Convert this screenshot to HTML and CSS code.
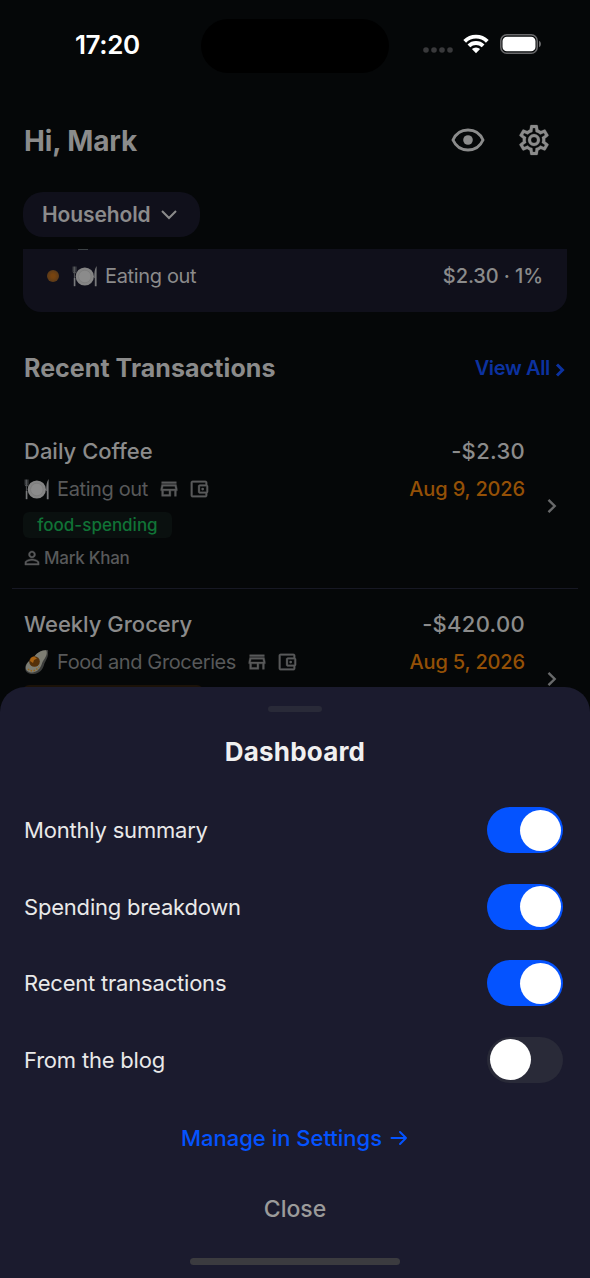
FILE: index.html
```html
<!DOCTYPE html>
<html lang="en">
<head>
<meta charset="utf-8">
<title>Dashboard</title>
<link rel="stylesheet" href="styles.css">
</head>
<body>
<svg class="defs" aria-hidden="true">
  <symbol id="plate" viewBox="0 0 26 22">
    <path d="M1.200 1.500v5.200q0 1.400 1.200 1.700V21M3.900 1.500v5.200q0 1.400-1.200 1.700M2.500 1.500V8" fill="none" stroke="#55575a" stroke-width="1"/>
    <path d="M1.800 13h1.600v8.200H1.800z" fill="#77787a"/>
    <path d="M24.600 1v20.200h-1.800v-8l-.6-.5q0-8.500 2.400-11.700z" fill="#77787a"/>
    <circle cx="12.800" cy="11.500" r="9.100" fill="#858585"/>
    <circle cx="12.800" cy="11.500" r="6.300" fill="#8b8b8b" stroke="#7b7b7b" stroke-width=".8"/>
  </symbol>
  <symbol id="store" viewBox="0 0 24 24"><path d="M18.360 9l.6 3H5.040l.6-3h12.720M20 4H4v2h16V4zm0 3H4l-1 5v2h1v6h10v-6h4v6h2v-6h1v-2l-1-5zM6 18v-4h6v4H6z" fill="currentColor" stroke="currentColor" stroke-width=".4"/></symbol>
  <symbol id="wallet" viewBox="0 0 24 24"><path d="M21 7.280V5c0-1.100-.9-2-2-2H5c-1.110 0-2 .9-2 2v14c0 1.100.89 2 2 2h14c1.100 0 2-.9 2-2v-2.280c.59-.35 1-.98 1-1.720V9c0-.74-.41-1.370-1-1.720zM20 9v6h-7V9h7zM5 19V5h14v2h-6c-1.100 0-2 .9-2 2v6c0 1.100.9 2 2 2h6v2H5z" fill="currentColor" stroke="currentColor" stroke-width=".3"/><circle cx="16" cy="12" r="1.500" fill="currentColor"/></symbol>
  <symbol id="chevron" viewBox="0 0 10 16"><path d="M1.500 1.800 7.700 8l-6.200 6.200" fill="none" stroke="currentColor" stroke-width="2.400"/></symbol>
</svg>
<div class="screen">
  <header class="status">
    <span class="time">17:20</span>
    <span class="island"></span>
    <span class="signals">
      <svg class="dots" viewBox="0 0 30 6"><g fill="#39393b"><circle cx="3" cy="3" r="2.800"/><circle cx="11" cy="3" r="2.800"/><circle cx="19" cy="3" r="2.800"/><circle cx="27" cy="3" r="2.800"/></g></svg>
      <svg class="wifi" viewBox="0 0 26 20"><g fill="none" stroke="#fff" stroke-width="3.900"><path d="M1.700 7.300a16 16 0 0 1 22.600 0"/><path d="M5.900 11.900a10.100 10.100 0 0 1 14.200 0"/></g><path d="M8.900 15.100a5.800 5.800 0 0 1 8.200 0L13 19.300z" fill="#fff"/></svg>
      <svg class="battery" viewBox="0 0 42 20"><rect x=".8" y=".8" width="36.400" height="18.400" rx="6" fill="none" stroke="#6a6a6c" stroke-width="1.500"/><rect x="2.500" y="2.700" width="33" height="14.600" rx="4.400" fill="#fff"/><path d="M39 6.800q2 1 2 3.200t-2 3.200z" fill="#6a6a6c"/></svg>
    </span>
  </header>
  <main class="page">
    <div class="greeting">
      <h1>Hi, Mark</h1>
      <svg class="eye" viewBox="0 0 34 26"><path d="M2 13C5 6.200 10.200 3 17 3S29 6.200 32 13C29 19.800 23.800 23 17 23S5 19.800 2 13z" fill="none" stroke="currentColor" stroke-width="2.900"/><circle cx="17" cy="13" r="4.800" fill="currentColor"/></svg>
      <svg class="gear" viewBox="0 0 24 24"><path fill="currentColor" stroke="currentColor" stroke-width=".15" d="M12,8A4,4 0 0,1 16,12A4,4 0 0,1 12,16A4,4 0 0,1 8,12A4,4 0 0,1 12,8M12,10A2,2 0 0,0 10,12A2,2 0 0,0 12,14A2,2 0 0,0 14,12A2,2 0 0,0 12,10M10,22C9.750,22 9.540,21.820 9.500,21.580L9.130,18.930C8.500,18.680 7.960,18.340 7.440,17.940L4.950,18.950C4.730,19.030 4.460,18.950 4.340,18.730L2.340,15.270C2.210,15.050 2.270,14.780 2.460,14.630L4.570,12.970L4.500,12L4.570,11L2.460,9.370C2.270,9.220 2.210,8.950 2.340,8.730L4.340,5.270C4.460,5.050 4.730,4.960 4.950,5.050L7.440,6.050C7.960,5.660 8.500,5.320 9.130,5.070L9.500,2.420C9.540,2.180 9.750,2 10,2H14C14.250,2 14.460,2.180 14.500,2.420L14.870,5.070C15.500,5.320 16.040,5.660 16.560,6.050L19.050,5.050C19.270,4.960 19.540,5.050 19.660,5.270L21.660,8.730C21.790,8.950 21.730,9.220 21.540,9.370L19.430,11L19.500,12L19.430,13L21.540,14.630C21.730,14.780 21.790,15.050 21.660,15.270L19.660,18.730C19.540,18.950 19.270,19.040 19.050,18.950L16.560,17.950C16.040,18.340 15.500,18.680 14.870,18.930L14.500,21.580C14.460,21.820 14.250,22 14,22H10M11.250,4L10.880,6.610C9.680,6.860 8.620,7.500 7.850,8.390L5.440,7.350L4.690,8.650L6.800,10.200C6.400,11.370 6.400,12.640 6.800,13.800L4.680,15.360L5.430,16.660L7.860,15.620C8.630,16.500 9.680,17.140 10.870,17.380L11.240,20H12.760L13.130,17.390C14.320,17.140 15.370,16.500 16.140,15.620L18.570,16.660L19.320,15.360L17.200,13.810C17.600,12.640 17.600,11.370 17.200,10.200L19.310,8.650L18.560,7.350L16.150,8.390C15.380,7.500 14.320,6.860 13.120,6.620L12.750,4H11.250Z"/></svg>
    </div>
    <button class="household"><span>Household</span><svg viewBox="0 0 18 12"><path d="M2 2l7 7 7-7" fill="none" stroke="currentColor" stroke-width="2"/></svg></button>
    <section class="breakdown">
      <span class="sliver"></span>
      <span class="bullet"></span>
      <svg class="plate"><use href="#plate"/></svg>
      <span class="category">Eating out</span>
      <span class="share">$2.30 · 1%</span>
    </section>
    <div class="section-head">
      <h2>Recent Transactions</h2>
      <a class="view-all"><span>View All</span><svg viewBox="0 0 10 14"><path d="M2 1.500 7.500 7 2 12.500" fill="none" stroke="currentColor" stroke-width="3"/></svg></a>
    </div>
    <article class="transaction">
      <div class="details">
        <div class="line title"><span>Daily Coffee</span><span class="amount">-$2.30</span></div>
        <div class="line meta"><svg class="plate"><use href="#plate"/></svg><span class="name">Eating out</span><svg class="mini"><use href="#store"/></svg><svg class="mini"><use href="#wallet"/></svg><span class="date">Aug 9, 2026</span></div>
        <span class="tag">food-spending</span>
        <div class="person"><svg viewBox="3 3 18 18"><path fill="currentColor" stroke="currentColor" stroke-width=".4" d="M12 5.900c1.160 0 2.100.94 2.100 2.100s-.94 2.100-2.100 2.100S9.900 9.160 9.900 8s.94-2.100 2.100-2.100m0 9c2.970 0 6.100 1.460 6.100 2.100v1.100H5.900V17c0-.64 3.130-2.100 6.100-2.100M12 4C9.790 4 8 5.790 8 8s1.790 4 4 4 4-1.790 4-4-1.790-4-4-4zm0 9c-2.670 0-8 1.340-8 4v3h16v-3c0-2.660-5.330-4-8-4z"/></svg><span>Mark Khan</span></div>
      </div>
      <svg class="go"><use href="#chevron"/></svg>
    </article>
    <article class="transaction">
      <div class="details">
        <div class="line title"><span>Weekly Grocery</span><span class="amount">-$420.00</span></div>
        <div class="line meta"><svg class="avocado" viewBox="0 0 26 26"><path d="M23.500 1C17 .5 13 4 9.500 8.500 5.500 11.500 1 14.500 1.200 19.500 1.500 24 6 25.500 10 25c5-.5 8.500-4 10-9 1-4 4.500-7 4-12.500C24.400 2 24 1.300 23.500 1z" fill="#3c3d3c"/><path d="M22 1.200C16 1 12 5 9 9c-3.500 2.500-7.300 5.500-7.200 10 .2 3.300 3.700 4.800 7 4.400 4.700-.6 7.600-4 9-8.400 1.200-4 5-7 5-11.200q0-2-.8-2.600z" fill="#7d7d73"/><path d="M4 20q5 4.500 11-2" fill="none" stroke="#9a671c" stroke-width="1.500" stroke-dasharray="1.500 1.500"/><circle cx="10.500" cy="12.500" r="5.300" fill="#553009"/><path d="M6 12q0-4 4-4.500l3 2-3 1.500-1 3z" fill="#a86213"/></svg><span class="name">Food and Groceries</span><svg class="mini"><use href="#store"/></svg><svg class="mini"><use href="#wallet"/></svg><span class="date">Aug 5, 2026</span></div>
        <span class="tag amber"></span>
      </div>
      <svg class="go"><use href="#chevron"/></svg>
    </article>
  </main>
  <section class="sheet">
    <span class="grabber"></span>
    <h2>Dashboard</h2>
    <div class="option"><span>Monthly summary</span><span class="switch on"></span></div>
    <div class="option"><span>Spending breakdown</span><span class="switch on"></span></div>
    <div class="option"><span>Recent transactions</span><span class="switch on"></span></div>
    <div class="option"><span>From the blog</span><span class="switch"></span></div>
    <a class="manage"><span>Manage in Settings</span><svg viewBox="0 0 18 16"><path d="M1.500 8h14.500M10 2l6 6-6 6" fill="none" stroke="currentColor" stroke-width="2" stroke-linecap="round" stroke-linejoin="round"/></svg></a>
    <button class="close">Close</button>
    <span class="home"></span>
  </section>
</div>
</body>
</html>
```
FILE: styles.css
```css
* { box-sizing: border-box; }
body { margin: 0; background: #050708; font-family: Inter, "Liberation Sans", sans-serif; font-weight: 500; }
h1, h2 { margin: 0; }
svg { display: block; flex: none; }
span { white-space: nowrap; }
button { border: 0; font: inherit; padding: 0; }
.defs { display: none; }
.screen { position: relative; width: 590px; height: 1278px; overflow: hidden; background: #050708; color: #8b8b8b; }

.status { height: 88px; display: grid; grid-template-columns: 201px 188px 1fr; align-items: center; }
.time { padding-left: 75px; color: #fff; font-size: 26px; font-weight: 600; letter-spacing: -.4px; }
.island { height: 54px; border-radius: 27px; background: #000; margin-top: 3px; }
.signals { display: flex; align-items: center; padding-left: 34px; }
.dots { width: 30px; height: 6px; margin-top: 12px; }
.wifi { width: 26px; height: 20px; margin-left: 10px; }
.battery { width: 42px; height: 20px; margin-left: 11px; }

.greeting { height: 104px; padding: 1px 38.500px 0 24px; display: flex; align-items: center; }
.greeting h1 { flex: 1; padding-top: 1px; font-size: 28px; font-weight: 650; letter-spacing: -.1px; }
.eye { width: 34px; height: 26px; margin: 0 31px 1px 0; }
.gear { width: 36px; height: 36px; margin-bottom: 1px; }
.household { display: flex; align-items: center; width: 177px; height: 45px; margin-left: 23px; padding-left: 19px; border-radius: 20px; background: #10101b; color: inherit; font-size: 21px; font-weight: 600; letter-spacing: -.1px; }
.household svg { width: 18px; height: 12px; margin-left: 9px; }
.breakdown { position: relative; margin: 12px 23px 0; height: 63px; padding: 0 24px 10px 24px; border-radius: 0 0 18px 18px; background: #10101b; display: flex; align-items: center; font-size: 20px; }
.sliver { position: absolute; left: 55px; top: 0; width: 10px; height: 1px; background: #3c4246; }
.bullet { width: 12px; height: 12px; border-radius: 50%; background: radial-gradient(#77430f 20%, #4b351f); }
.plate { width: 26px; height: 22px; }
.breakdown .plate { margin-left: 13px; }
.category { flex: 1; margin-left: 7px; font-weight: 400; letter-spacing: -.35px; }
.share { letter-spacing: -.1px; }
.section-head { height: 103px; padding: 9px 25px 0 24px; display: flex; align-items: center; justify-content: space-between; }
.section-head h2 { font-size: 25px; font-weight: 650; letter-spacing: .05px; }
.view-all { display: flex; align-items: center; color: #0c32a0; font-size: 20px; font-weight: 600; letter-spacing: -.35px; }
.view-all svg { width: 10px; height: 14px; margin: 3px 0 0 5px; }

.transaction { margin: 0 12px; height: 173.500px; padding: 20px 21px 0 12px; border-bottom: 1px solid #171824; display: flex; }
.transaction + .transaction { padding-top: 19.500px; }
.details { flex: 1; }
.line { display: flex; align-items: center; }
.title { height: 32px; font-size: 22px; }
.amount, .date { margin-left: auto; }
.amount { letter-spacing: .3px; }
.meta { height: 26px; margin-top: 9px; font-size: 20px; color: #58595a; }
.name { margin: 0 10px 0 7px; font-weight: 400; letter-spacing: -.38px; }
.avocado { width: 26px; height: 26px; }
.mini { width: 22px; height: 22px; margin-right: 8px; }
.date { color: #945006; letter-spacing: -.15px; }
.tag { display: flex; align-items: center; justify-content: center; width: 149px; height: 26px; margin: 10px 0 0 -1px; border-radius: 6px; background: #0a100f; color: #107336; font-size: 17px; }
.tag.amber { width: 180px; background: #1b1208; }
.person { display: flex; align-items: center; height: 22px; margin: 9px 0 0; color: #58595a; font-size: 17px; letter-spacing: -.25px; }
.person svg { width: 16px; height: 16px; margin-right: 4px; }
.go { width: 10px; height: 16px; margin: 63px 0 0 22px; color: #68696a; }

.sheet { position: absolute; inset: 687px 0 0; border-radius: 25px 25px 0 0; background: #1b1b2e; color: #e9e9e9; display: flex; flex-direction: column; align-items: center; }
.grabber { width: 54px; height: 6px; margin-top: 19px; border-radius: 3px; background: #292a38; }
.sheet h2 { height: 80px; line-height: 80px; font-size: 26px; font-weight: 650; letter-spacing: .2px; color: #f0f0f0; }
.option { width: 100%; height: 76.500px; padding: 0 27px 0 24px; display: flex; align-items: center; justify-content: space-between; font-size: 22px; font-weight: 400; letter-spacing: -.2px; }
.switch { display: flex; align-items: center; width: 76px; height: 46px; padding: 0 2px 0 3px; border-radius: 23px; background: #292a38; }
.switch::before { content: ""; width: 41px; height: 41px; border-radius: 50%; background: #fff; }
.switch.on { justify-content: flex-end; background: #0453ff; }
.manage { height: 80px; padding-right: 1px; display: flex; align-items: center; gap: 8px; color: #0453ff; font-size: 22px; }
.manage svg { width: 18px; height: 16px; }
.close { height: 62px; background: none; color: #9b9b9b; font-size: 23px; }
.home { width: 210px; height: 7px; margin-top: 18px; border-radius: 4px; background: #3b3b3f; }
```
